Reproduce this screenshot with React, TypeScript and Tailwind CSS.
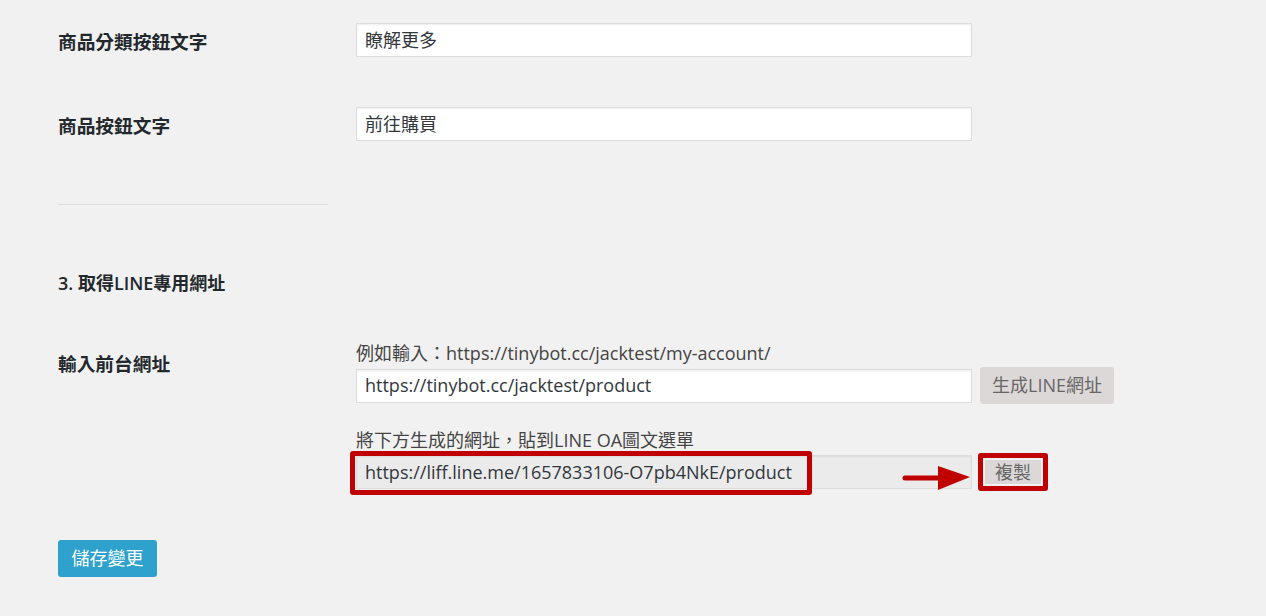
import React from "react";

const font = { fontFamily: '"Open Sans", "Noto Sans CJK TC", sans-serif' };

const Field = ({ value, readOnly }: { value: string; readOnly?: boolean }) => (
    <div
        className={`w-[616px] h-[34px] border border-[#dddddd] shadow-[inset_0_1px_2px_rgba(0,0,0,0.07)] px-[8px] flex items-center text-[18px] text-[#32373c] ${readOnly ? "bg-[#ebebeb]" : "bg-white"}`}
    >
        {value}
    </div>
);

export default function App() {
    return (
        <div className="min-h-screen bg-[#f1f1f1] pl-[58px] pt-[23px] pb-[40px]" style={font}>
            {/* 商品分類按鈕 */}
            <div className="flex items-center">
                <div className="w-[298px] text-[18.7px] font-semibold text-[#23282d] pt-[4px]">商品分類按鈕文字</div>
                <Field value="瞭解更多" />
            </div>

            <div className="flex items-center mt-[50px]">
                <div className="w-[298px] text-[18.7px] font-semibold text-[#23282d] pt-[4px]">商品按鈕文字</div>
                <Field value="前往購買" />
            </div>

            <div className="mt-[63px] w-[270px] h-px bg-[#dddddd]" />

            <h2 className="mt-[66px] text-[18px] leading-[24px] font-semibold text-[#23282d]">3. 取得LINE專用網址</h2>

            <div className="flex mt-[47px]">
                <div className="w-[298px] text-[18.7px] font-semibold text-[#23282d] pt-[8px]">輸入前台網址</div>
                <div className="flex flex-col">
                    <div className="text-[18px] leading-[22px] text-[#444444]">例如輸入：https://tinybot.cc/jacktest/my-account/</div>
                    <div className="flex items-center gap-[8px] mt-[3px]">
                        <Field value="https://tinybot.cc/jacktest/product" />
                        <button className="h-[37px] px-[12px] rounded-[3px] bg-[#dcd8d8] text-[18px] text-[#666666]">生成LINE網址</button>
                    </div>

                    <div className="text-[18px] leading-[22px] text-[#444444] mt-[25px]">將下方生成的網址，貼到LINE OA圖文選單</div>
                    <div className="flex items-center mt-[2px]">
                        <div className="relative">
                            <Field value="https://liff.line.me/1657833106-O7pb4NkE/product" readOnly />
                            {/* 紅框標示 */}
                            <div className="absolute left-[-6px] top-[-4px] w-[462px] h-[44px] border-[5px] border-[#c00000] rounded-[3px]" />
                            <svg className="absolute left-[544px] top-[8px]" width="74" height="30" viewBox="0 0 74 30">
                                <line x1="5" y1="15" x2="44" y2="15" stroke="#c00000" strokeWidth="5" strokeLinecap="round" />
                                <polygon points="38,3 70,14 38,27" fill="#c00000" />
                            </svg>
                        </div>
                        <div className="ml-[6px] border-[5px] border-[#c00000] rounded-[3px] p-[2px] h-[38px] flex">
                            <button className="bg-[#dcd8d8] px-[10px] text-[18px] text-[#666666] leading-[24px]">複製</button>
                        </div>
                    </div>
                </div>
            </div>

            <button className="mt-[49px] w-[99px] h-[37px] rounded-[3px] bg-[#2ea2cc] text-white text-[18px]">儲存變更</button>
        </div>
    );
}
